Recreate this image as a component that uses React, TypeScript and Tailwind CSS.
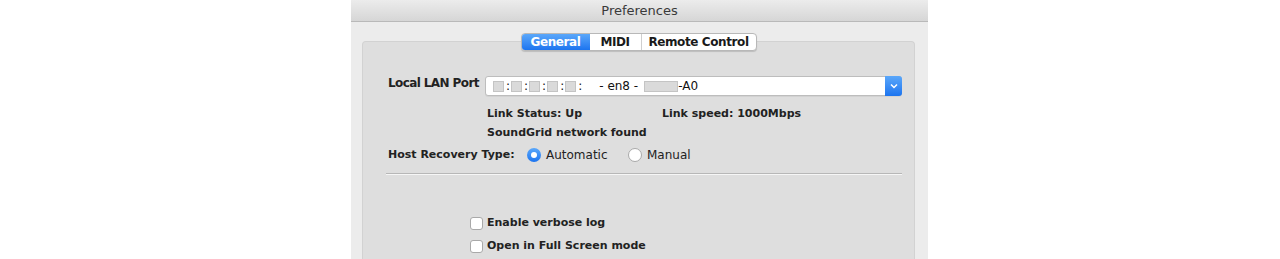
import React from "react";

const font = { fontFamily: '"DejaVu Sans", "Liberation Sans", sans-serif' };

function GraySq({ w = 11 }: { w?: number }) {
  return (
    <span
      className="inline-block h-[11px] border border-[#c4c4c4] bg-[#dadada] align-middle"
      style={{ width: w }}
    />
  );
}

function Colon() {
  return <span className="ml-[2px] mr-[1px]">:</span>;
}

export default function App() {
  return (
    <div className="h-[259px] w-[1280px] overflow-hidden bg-white" style={font}>
      <div className="ml-[351px] flex h-[259px] w-[577px] flex-col bg-[#ececec]">
        {/* Title bar */}
        <div className="flex h-[22px] shrink-0 items-center justify-center border-b border-[#b9b9b9] bg-gradient-to-b from-[#ececec] to-[#d6d6d6] text-[13px] text-[#3a3a3a]">
          Preferences
        </div>
        {/* Body */}
        <div className="flex flex-1 flex-col pl-[11px] pr-[13px] pt-[11px]">
          {/* Tabs */}
          <div className="relative z-10 flex justify-center">
            <div className="flex h-[18px] overflow-hidden rounded-[4px] border border-[#b8b8b8] bg-white text-[12px] font-bold leading-none tracking-[-0.4px] text-[#1a1a1a] shadow-[0_1px_1px_rgba(0,0,0,0.15)]">
              <div className="flex w-[68px] items-center justify-center bg-gradient-to-b from-[#5aa7fa] to-[#1b74ef] text-white">
                General
              </div>
              <div className="flex w-[52px] items-center justify-center border-r border-[#cfcfcf]">
                MIDI
              </div>
              <div className="flex w-[114px] items-center justify-center">
                Remote Control
              </div>
            </div>
          </div>
          {/* Group box */}
          <div className="-mt-[10px] flex flex-1 flex-col rounded-t-[4px] border border-b-0 border-[#d2d2d2] bg-[#dedede] pl-[25px] pr-[12px] pt-[34px] text-[11px] font-bold text-[#222]">
            {/* LAN port row */}
            <div className="flex h-[20px]">
              <div className="w-[97px] whitespace-nowrap text-[12px] leading-[14px] tracking-[-0.6px]">Local LAN Port</div>
              <div className="flex h-[20px] flex-1 items-center rounded-[3px] border border-[#bdbdbd] bg-white pl-[7px] text-[12px] font-normal text-[#111] shadow-[0_1px_0_rgba(0,0,0,0.05)]">
                <div className="flex flex-1 items-center leading-none">
                  <GraySq />
                  <Colon />
                  <GraySq />
                  <Colon />
                  <GraySq />
                  <Colon />
                  <GraySq />
                  <Colon />
                  <GraySq />
                  <Colon />
                  <span className="ml-[16px]">- en8 -</span>
                  <span className="ml-[6px]">
                    <GraySq w={34} />
                  </span>
                  <span>-A0</span>
                </div>
                <div className="-mr-px flex h-[20px] w-[17px] items-center justify-center rounded-r-[3px] bg-gradient-to-b from-[#5aa7fa] to-[#1b74ef]">
                  <svg width="8" height="6" viewBox="0 0 8 6">
                    <path d="M1 1.5 L4 4.5 L7 1.5" stroke="white" strokeWidth="1.5" fill="none" />
                  </svg>
                </div>
              </div>
            </div>
            {/* Link status */}
            <div className="mt-[10px] flex h-[16px] items-center whitespace-nowrap pl-[99px]">
              <span className="w-[175px]">Link Status: Up</span>
              <span>Link speed: 1000Mbps</span>
            </div>
            <div className="mt-[3px] flex h-[16px] items-center whitespace-nowrap pl-[99px]">
              SoundGrid network found
            </div>
            {/* Host recovery */}
            <div className="mt-[6px] flex h-[16px] items-center whitespace-nowrap">
              <span className="w-[139px]">Host Recovery Type:</span>
              <span className="flex h-[14px] w-[14px] items-center justify-center rounded-full bg-gradient-to-b from-[#5aa7fa] to-[#1b74ef]">
                <span className="h-[6px] w-[6px] rounded-full bg-white" />
              </span>
              <span className="ml-[5px] w-[82px] text-[12px] font-normal">Automatic</span>
              <span className="h-[14px] w-[14px] rounded-full border border-[#a9a9a9] bg-white" />
              <span className="ml-[5px] text-[12px] font-normal">Manual</span>
            </div>
            {/* Separator */}
            <div className="-ml-[2px] mt-[10px] h-[2px] border-t border-[#b7b7b7] bg-[#f6f6f6]" />
            {/* Checkboxes */}
            <div className="mt-[40px] flex h-[16px] items-center whitespace-nowrap pl-[82px]">
              <span className="h-[13px] w-[13px] rounded-[3px] border border-[#a9a9a9] bg-white" />
              <span className="ml-[4px]">Enable verbose log</span>
            </div>
            <div className="mt-[7px] flex h-[16px] items-center whitespace-nowrap pl-[82px]">
              <span className="h-[13px] w-[13px] rounded-[3px] border border-[#a9a9a9] bg-white" />
              <span className="ml-[4px]">Open in Full Screen mode</span>
            </div>
          </div>
        </div>
      </div>
    </div>
  );
}
